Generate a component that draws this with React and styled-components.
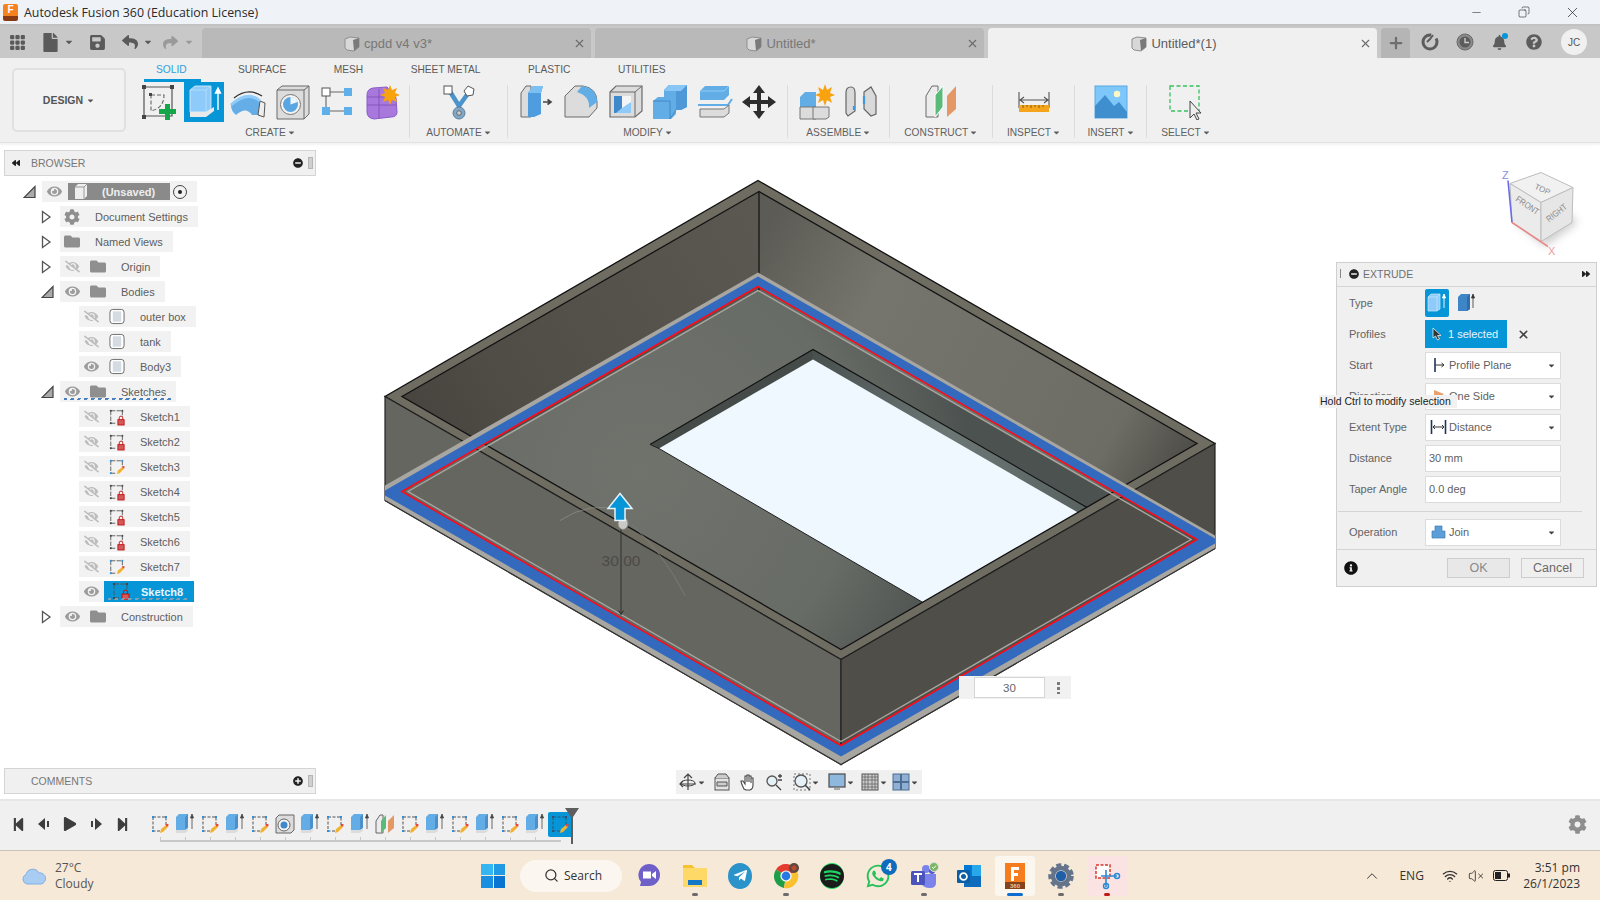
import React from "react";
import styled, { createGlobalStyle } from "styled-components";
import {
  FaCog, FaEye, FaEyeSlash, FaFolder, FaCaretDown, FaFile, FaSave, FaReply, FaShare,
  FaBell, FaQuestionCircle, FaMinusCircle, FaPlusCircle, FaInfoCircle, FaPlay,
  FaStepBackward, FaStepForward, FaTelegramPlane, FaSpotify, FaWhatsapp, FaForward, FaBackward,
} from "react-icons/fa";
import { BsGrid3X3GapFill } from "react-icons/bs";
import { Search, X, Minus, Plus, Copy, ChevronUp, Wifi, VolumeX } from "lucide-react";

const GlobalStyle = createGlobalStyle`
  html, body { margin: 0; padding: 0; background: #fff; }
  body { font-family: "Liberation Sans", Arial, sans-serif; overflow: hidden; }
  * { box-sizing: border-box; }
`;

const Page = styled.div`
  width: 1600px;
  height: 900px;
  display: flex;
  flex-direction: column;
  overflow: hidden;
`;

/* ---------- title bar ---------- */
const TitleBar = styled.div`
  height: 24px;
  background: #eff3f8;
  display: flex;
  align-items: center;
  padding-left: 3px;
  flex: none;
`;
const AppLogo = styled.div`
  width: 15px;
  height: 17px;
  border-radius: 2px;
  background: linear-gradient(#f58220 0 68%, #8a3a12 68%);
  color: #fff;
  font-size: 10px;
  font-weight: 700;
  text-align: center;
  line-height: 12px;
`;
const TitleText = styled.span`
  margin-left: 6px;
  font-family: "Open Sans", sans-serif;
  font-size: 12.4px;
  color: #2b2b2b;
`;
const WindowButtons = styled.div`
  margin-left: auto;
  display: flex;
  color: #222;
  padding-right: 4px;
`;
const WindowButton = styled.div`
  width: 48px;
  display: flex;
  justify-content: center;
  align-items: center;
  svg { transform: ${(p) => (p.$flip ? "scaleX(-1)" : "none")}; }
`;

/* ---------- document tabs ---------- */
const TabStrip = styled.div`
  height: 34px;
  flex: none;
  background: #c8c8c8;
  border-top: 2px solid #c2c2c2;
  display: flex;
  position: relative;
`;
const NavTools = styled.div`
  width: 202px;
  flex: none;
  position: relative;
  display: flex;
  align-items: center;
  padding-left: 9px;
  color: #5a5a5a;
`;
const NavTool = styled.div`
  display: flex;
  align-items: center;
  justify-content: center;
  flex: none;
  width: ${(p) => p.$w}px;
  margin-left: ${(p) => p.$gap || 0}px;
  color: ${(p) => (p.$dim ? "#9a9a9a" : "#5a5a5a")};
`;
const Tabs = styled.div`
  display: flex;
  gap: 4px;
  padding-top: 2px;
`;
const Tab = styled.div`
  width: 389px;
  height: 30px;
  border-radius: 4px 4px 0 0;
  background: ${(p) => (p.$active ? "#f0f0f0" : "#b9b9b9")};
  color: ${(p) => (p.$active ? "#5c5c5c" : "#777")};
  display: flex;
  align-items: center;
  font-size: 13px;
`;
const TabLabel = styled.div`
  flex: 1;
  display: flex;
  align-items: center;
  justify-content: center;
  gap: 4px;
  padding: 1px 0 0 7px;
`;
const TabClose = styled.div`
  width: 24px;
  display: flex;
  justify-content: center;
  color: #6a6a6a;
`;
const NewTab = styled.div`
  width: 29px;
  height: 30px;
  margin: 2px 0 0 4px;
  background: #b5b5b5;
  border-radius: 4px 4px 0 0;
  color: #6e6e6e;
  display: flex;
  align-items: center;
  justify-content: center;
`;
const StripIcons = styled.div`
  display: flex;
  align-items: center;
  color: #5c5c5c;
  padding-left: 3px;
`;
const StripIcon = styled.div`
  width: 34.5px;
  height: 28px;
  display: flex;
  align-items: center;
  justify-content: center;
  position: relative;
`;
const BellDot = styled.span`
  position: absolute;
  width: 6px;
  height: 6px;
  border-radius: 50%;
  background: #0696d7;
  top: 5px;
  right: 9px;
`;
const Avatar = styled.div`
  width: 26px;
  height: 26px;
  border-radius: 50%;
  background: #f0f0f0;
  margin-left: 10px;
  color: #555;
  font-size: 10px;
  display: flex;
  align-items: center;
  justify-content: center;
`;

/* ---------- ribbon ---------- */
const Toolbar = styled.div`
  height: 85px;
  flex: none;
  background: #f0f0f0;
  border-bottom: 1px solid #e2e2e2;
  box-shadow: 0 2px 2px #f2f2f2;
  display: flex;
  padding-left: 12px;
  position: relative;
  z-index: 2;
`;
const DesignButton = styled.div`
  width: 114px;
  height: 64px;
  margin-top: 10px;
  border: 2px solid #e0e0e0;
  border-radius: 5px;
  background: #f2f2f2;
  color: #555;
  font-size: 10.5px;
  font-weight: 700;
  display: flex;
  align-items: center;
  justify-content: center;
  gap: 3px;
`;
const RibbonBody = styled.div`
  display: flex;
  flex-direction: column;
`;
const RibbonTabs = styled.div`
  height: 24px;
  display: flex;
  align-items: center;
  gap: 47.5px;
  padding: 0 0 1px 30px;
`;
const RibbonTab = styled.span`
  font-size: 10.2px;
  color: ${(p) => (p.$active ? "#2e9fe0" : "#5a5a5a")};
  margin-right: ${(p) => (p.$active ? "4px" : "0")};
`;
const Groups = styled.div`
  display: flex;
  height: 56px;
`;
const Group = styled.div`
  width: ${(p) => p.$w}px;
  padding-left: ${(p) => p.$pad || 0}px;
  flex: none;
  display: flex;
  flex-direction: column;
  align-items: center;
  position: relative;
  &::after {
    content: "";
    position: absolute;
    right: 0;
    top: 3px;
    bottom: 0;
    width: 1px;
    background: ${(p) => (p.$last ? "transparent" : "#dcdcdc")};
  }
`;
const ToolRow = styled.div`
  display: flex;
  height: 40px;
`;
const ToolSlot = styled.div`
  width: 44.5px;
  display: flex;
  justify-content: center;
`;
const ToolButton = styled.div`
  width: 40px;
  height: 40px;
  display: flex;
  align-items: center;
  justify-content: center;
  position: relative;
  background: ${(p) => (p.$active ? "#0696d7" : "transparent")};
  ${(p) =>
    p.$active &&
    `&::before {
      content: "";
      position: absolute;
      top: -3px;
      left: -40px;
      width: 57px;
      height: 3px;
      background: #0696d7;
    }`}
`;
const GroupLabel = styled.div`
  height: 21px;
  padding-top: 5px;
  display: flex;
  align-items: center;
  gap: 1px;
  font-size: 10.2px;
  color: #5f5f5f;
`;

const Svg36 = styled.svg.attrs({ viewBox: "0 0 36 36" })`
  width: 36px;
  height: 36px;
  display: block;
`;

const SketchIcon = () => (
  <Svg36>
    <path d="M3 3H31V32H3Z" fill="none" stroke="#555" strokeWidth="1.2" />
    <path d="M10 11H23Q23 24 10 27Z" fill="none" stroke="#666" strokeWidth="1.1" strokeDasharray="4 2" />
    <g fill="#444">
      <rect x="1" y="1" width="4" height="4" /><rect x="29" y="1" width="4" height="4" />
      <rect x="1" y="31" width="4" height="4" /><rect x="8" y="9" width="3" height="3" />
    </g>
    <path d="M24 20h5v5h6v5h-6v6h-5v-6h-6v-5h6z" fill="#13a64a" />
  </Svg36>
);
const ExtrudeIcon = () => (
  <Svg36>
    <path d="M4 6L9 2H25V25L20 28H4Z" fill="#8ecbfa" stroke="#dff1ff" strokeWidth=".8" />
    <path d="M20 28V6H4M20 6L25 2" fill="none" stroke="#b9e0fb" strokeWidth=".8" />
    <path d="M4 28H20L28 23V27L20 33H4Z" fill="#e9e9e9" />
    <path d="M32 26V6M29.5 9L32 4L34.5 9Z" stroke="#fff" strokeWidth="1.4" fill="#fff" />
  </Svg36>
);
const RevolveIcon = () => (
  <Svg36>
    <path d="M4 14Q18 3 32 12" fill="none" stroke="#333" strokeWidth="1.3" />
    <path d="M1 21Q18 6 30 17L28 31H22Q16 22 6 31Q1 27 1 21Z" fill="#64ade6" />
    <path d="M30 17L35 19L34 33L28 31Z" fill="#eee" stroke="#555" />
    <path d="M1 21Q18 6 30 17" fill="none" stroke="#8ecbfa" strokeWidth="3" />
  </Svg36>
);
const HoleIcon = () => (
  <Svg36>
    <path d="M2 6L7 2H34V30L29 35H2Z" fill="#dcdcdc" stroke="#6b6b6b" />
    <path d="M29 35V6H2M29 6L34 2" fill="none" stroke="#6b6b6b" />
    <circle cx="15.500" cy="20.500" r="10" fill="#f4f4f4" stroke="#777" />
    <circle cx="15.500" cy="20.500" r="7.500" fill="#5aa6e2" />
    <path d="M15.500 20.500V13A7.500 7.500 0 0 1 22.500 18Z" fill="#eef6fc" />
  </Svg36>
);
const PatternIcon = () => (
  <Svg36>
    <path d="M7 8H27M7 8V27M7 27H27" stroke="#666" strokeWidth="1.1" fill="none" />
    <rect x="3" y="4" width="8" height="8" fill="#fff" stroke="#555" />
    <rect x="25" y="4" width="8" height="8" fill="#5fb0ea" />
    <rect x="3" y="23" width="8" height="8" fill="#5fb0ea" />
    <rect x="25" y="23" width="8" height="8" fill="#5fb0ea" />
  </Svg36>
);
const FormIcon = () => (
  <Svg36>
    <path d="M3 11Q3 5 9 4L23 3L32 14L33 28Q33 33 27 33L10 35Q3 34 3 28Z" fill="#a878dc" stroke="#8a5cc8" />
    <path d="M3 21H32M15 5V34M3 13H30" stroke="#7f54b8" fill="none" strokeWidth=".9" />
    <path d="M26 1l2 5 5-2-2 5 5 2-5 2 2 5-5-2-2 5-2-5-5 2 2-5-5-2 5-2-2-5 5 2z" fill="#f7a20e" />
  </Svg36>
);
const AutomateIcon = () => (
  <Svg36>
    <path d="M8 6L18 22L28 8M18 22V30" fill="none" stroke="#4a93cc" strokeWidth="4.5" />
    <rect x="3" y="2" width="8" height="8" fill="#fff" stroke="#555" />
    <path d="M27 2l6 3-1 6-6 1-3-5z" fill="#fff" stroke="#555" />
    <circle cx="18" cy="29" r="6" fill="#7fa7c8" stroke="#5e7f9a" />
    <circle cx="18" cy="29" r="2.3" fill="#d0d0d0" stroke="#666" />
  </Svg36>
);
const PressPullIcon = () => (
  <Svg36>
    <path d="M2 33V9L7 2H12V33Z" fill="#dcdcdc" stroke="#6b6b6b" />
    <path d="M9 33V9L14 2H24L22 9V30L15 33Z" fill="#4f9ddf" />
    <path d="M9 9H22L24 2H14Z" fill="#7cc0f3" />
    <path d="M24 18H31M28.500 15.500L32 18L28.500 20.500" stroke="#444" strokeWidth="1.6" fill="none" />
  </Svg36>
);
const FilletIcon = () => (
  <Svg36>
    <path d="M2 33V12L12 2H20Q34 4 34 18V24L26 33Z" fill="#dcdcdc" stroke="#6b6b6b" />
    <path d="M19 2Q34 4 34 18L26 24Q27 12 14 8Z" fill="#62ade6" />
  </Svg36>
);
const ShellIcon = () => (
  <Svg36>
    <path d="M2 8L8 2H34V27L27 33H2Z" fill="#dcdcdc" stroke="#6b6b6b" strokeWidth="1.2" />
    <path d="M27 33V8H2M27 8L34 2" fill="none" stroke="#6b6b6b" />
    <path d="M6 12H14V24H23V29H6Z" fill="#3f89cb" />
    <path d="M14 12H23V24H14Z" fill="#f4f4f4" />
    <path d="M14 24L23 18V29H8Z" fill="#8ecbfa" />
  </Svg36>
);
const CombineIcon = () => (
  <Svg36>
    <path d="M12 6L17 1H35V23L29 26H24V30L19 35H1V17L6 13H12Z" fill="#62ade6" />
    <path d="M24 26V7H12L17 1H35V23L29 26Z" fill="#4f98d8" />
    <path d="M12 7L17 1H35L29 7Z" fill="#87c6f5" />
    <path d="M24 26L18 35V17H1" fill="none" stroke="#4388c4" />
  </Svg36>
);
const OffsetIcon = () => (
  <Svg36>
    <path d="M3 7L8 2H32V11L27 16H3Z" fill="#62ade6" />
    <path d="M3 7H27L32 2" fill="none" stroke="#8ecbfa" />
    <path d="M1 21L31 21L35 15" fill="none" stroke="#62ade6" strokeWidth="2" />
    <path d="M3 25H27L32 21V29L27 33H3Z" fill="#dcdcdc" stroke="#777" />
  </Svg36>
);
const MoveIcon = () => (
  <Svg36>
    <path d="M18 1L24 9H20V16H27V12L35 18L27 24V20H20V27H24L18 35L12 27H16V20H9V24L1 18L9 12V16H16V9H12Z" fill="#2d2d2d" />
  </Svg36>
);
const NewComponentIcon = () => (
  <Svg36>
    <path d="M1 13L6 8H17V23H1Z" fill="#62ade6" />
    <path d="M1 23H17V35H1Z" fill="#dcdcdc" stroke="#777" />
    <path d="M14 23H30V33L27 35H14Z" fill="#dcdcdc" stroke="#777" />
    <path d="M26 0l2 6 5-3-2 6 5 2-5 2 2 6-5-3-2 6-2-6-5 3 2-6-5-2 5-2-2-6 5 3z" fill="#f7a20e" />
  </Svg36>
);
const JointIcon = () => (
  <Svg36>
    <path d="M3 9Q3 3 8 3Q12 3 12 9V27L5 32L3 29Z" fill="#d9d9d9" stroke="#666" strokeWidth="1.2" />
    <path d="M21 8L28 3L33 12V30L28 32L21 25Z" fill="#d9d9d9" stroke="#666" strokeWidth="1.2" />
    <path d="M11 22V26M21 12V20" stroke="#3f97dc" strokeWidth="2.2" />
  </Svg36>
);
const PlanesIcon = () => (
  <Svg36>
    <path d="M3 12L9 2H15V33H3Z" fill="#ececec" stroke="#6b6b6b" />
    <path d="M12 33V11L20 2V23Z" fill="#5abb78" stroke="#fff" />
    <path d="M24 33V12L33 2V25Z" fill="#e39866" />
  </Svg36>
);
const MeasureIcon = () => (
  <Svg36>
    <path d="M3 8V24M33 8V24M4 16H32M8 13L4 16L8 19M28 13L32 16L28 19" stroke="#555" fill="none" strokeWidth="1.1" />
    <rect x="3" y="21" width="30" height="7" fill="#f4a51c" />
    <path d="M7 21v3M11 21v2M15 21v3M19 21v2M23 21v3M27 21v2" stroke="#8a5c08" />
  </Svg36>
);
const PictureIcon = () => (
  <Svg36>
    <rect x="2" y="2" width="32" height="32" fill="#7ec7fb" stroke="#5ba8e2" />
    <circle cx="24" cy="10" r="3.2" fill="#fdf7c4" />
    <path d="M2 34V22L12 11L21 22L26 18L34 28V34Z" fill="#3f8fce" />
  </Svg36>
);
const SelectIcon = () => (
  <Svg36>
    <path d="M2 2H31V27H2Z" fill="none" stroke="#37c15f" strokeWidth="1.3" strokeDasharray="4 2.5" />
    <path d="M22 17V34L26 30L29 36L31 35L28 29H33Z" fill="#eee" stroke="#444" />
  </Svg36>
);

const ribbon = [
  { name: "CREATE", w: 284, pad: 5, tools: [SketchIcon, ExtrudeIcon, RevolveIcon, HoleIcon, PatternIcon, FormIcon], active: 1 },
  { name: "AUTOMATE", w: 98, tools: [AutomateIcon] },
  { name: "MODIFY", w: 280, tools: [PressPullIcon, FilletIcon, ShellIcon, CombineIcon, OffsetIcon, MoveIcon] },
  { name: "ASSEMBLE", w: 101.5, tools: [NewComponentIcon, JointIcon] },
  { name: "CONSTRUCT", w: 103.5, tools: [PlanesIcon] },
  { name: "INSPECT", w: 82, tools: [MeasureIcon] },
  { name: "INSERT", w: 72, tools: [PictureIcon] },
  { name: "SELECT", w: 78, tools: [SelectIcon], last: true },
];

const CubeGlyph = ({ size = 16 }) => (
  <svg width={size} height={size} viewBox="0 0 16 16">
    <path d="M1 3L6 1L15 2V11L10 15L3 14L1 12Z" fill="#d8d8d8" stroke="#8e8e8e" />
    <path d="M9 4L15 2V11L10 15Z" fill="#7a7a7a" />
  </svg>
);

/* ---------- viewport ---------- */
const Viewport = styled.div`
  flex: 1;
  position: relative;
  background: #fff;
  overflow: hidden;
`;
const ModelSvg = styled.svg`
  position: absolute;
  inset: 0;
  width: 100%;
  height: 100%;
`;
const SidePanel = styled.div`
  position: absolute;
  left: 4px;
  top: 7px;
  width: 312px;
`;
const PanelHeader = styled.div`
  height: 26px;
  background: #f0f0f0;
  border: 1px solid #d4d4d4;
  display: flex;
  align-items: center;
  padding-left: 7px;
  color: #777;
  font-size: 10.5px;
`;
const HeaderTitle = styled.span`
  margin-left: ${(p) => p.$offset}px;
`;
const PanelEnd = styled.div`
  margin-left: auto;
  display: flex;
  align-items: center;
  gap: 5px;
  padding-right: 2px;
  color: #222;
  &::after {
    content: "";
    width: 3px;
    height: 10px;
    background: #cfcfcf;
    border: 1px solid #b5b5b5;
  }
`;
const CommentsPanel = styled(PanelHeader)`
  position: absolute;
  left: 4px;
  bottom: 5px;
  width: 312px;
`;
const Tree = styled.div`
  display: flex;
  flex-direction: column;
  gap: 4px;
  padding-top: 5px;
`;
const TreeRow = styled.div`
  height: 21px;
  display: flex;
  align-items: center;
  padding-left: ${(p) => [19, 37, 75][p.$depth]}px;
`;
const Toggle = styled.svg.attrs({ viewBox: "0 0 14 14" })`
  width: 14px;
  height: 14px;
  flex: none;
  margin-right: 5px;
`;
const Chip = styled.div`
  height: 21px;
  display: flex;
  align-items: center;
  background: #f2f2f2;
  padding: 0 10px 0 4px;
  color: #5e5e5e;
  font-size: 11px;
  position: relative;
`;
const Stripe = styled.span`
  position: absolute;
  left: 4px;
  right: 4px;
  bottom: 2px;
  height: 2px;
  background: repeating-linear-gradient(
    120deg,
    ${(p) => p.$color} 0 3px,
    transparent 3px 6px
  );
`;
const EyeSlot = styled.span`
  width: 16px;
  flex: none;
  display: flex;
  justify-content: center;
  color: ${(p) => (p.$off ? "#bcbcbc" : "#9c9c9c")};
  margin-right: 10px;
`;
const NodeIcon = styled.span`
  width: 16px;
  flex: none;
  display: flex;
  justify-content: center;
  color: #8f8f8f;
`;
const NodeLabel = styled.span`
  margin-left: 15px;
  white-space: nowrap;
`;
const RootChip = styled.div`
  width: 102px;
  height: 17px;
  margin-left: -4px;
  background: #8a8a8a;
  display: flex;
  align-items: center;
  color: #eee;
  font-weight: 700;
  font-size: 11px;
`;
const RootLabel = styled.span`
  margin-left: 12px;
`;
const Target = styled.span`
  width: 14px;
  height: 14px;
  margin: 0 0 0 3px;
  border: 1px solid #444;
  border-radius: 50%;
  display: flex;
  align-items: center;
  justify-content: center;
  &::after {
    content: "";
    width: 4px;
    height: 4px;
    background: #222;
    border-radius: 50%;
  }
`;
const SelectedChip = styled.div`
  height: 21px;
  width: 90px;
  margin-left: -5px;
  padding-left: 37px;
  display: flex;
  align-items: center;
  background: #0696d7;
  color: #e8f6ff;
  font-weight: 700;
  position: relative;
`;
const SelectedGlyph = styled.span`
  position: absolute;
  left: 8px;
  top: 1px;
  display: flex;
`;

const Body = () => (
  <svg width="17" height="17" viewBox="0 0 17 17">
    <rect x="1" y="1" width="15" height="15" rx="3" fill="#fff" stroke="#666" />
    <rect x="4" y="3" width="9" height="11" fill="#d5dbe2" />
  </svg>
);
const TreeSketch = ({ kind }) => (
  <svg width="18" height="18" viewBox="0 0 18 18">
    <path d="M2 2H15M2 2V16M2 16H8M15 2V9" stroke="#555" fill="none" strokeDasharray="5 1.5" />
    {kind === "lock" ? (
      <g>
        <rect x="1" y="1" width="2" height="2" fill="#444" /><rect x="14" y="1" width="2" height="2" fill="#444" />
        <rect x="1" y="15" width="2" height="2" fill="#444" />
        <rect x="10" y="12" width="7" height="6" fill="#d35a5a" stroke="#c01010" />
        <path d="M11.5 12V10a2 2 0 0 1 4 0V12" fill="none" stroke="#c01010" />
      </g>
    ) : (
      <g>
        <rect x="1" y="1" width="2" height="2" fill="#2a8fe0" /><rect x="14" y="1" width="2" height="2" fill="#2a8fe0" />
        <rect x="1" y="15" width="2" height="2" fill="#2a8fe0" />
        <path d="M9 17L10 13L15 9L17 11L12 16Z" fill="#f2b233" />
        <rect x="15" y="8" width="2.4" height="2.4" fill="#e8483a" />
      </g>
    )}
  </svg>
);

const Open = () => (
  <Toggle>
    <path d="M1.5 1.5V12.5L9 7Z" fill="#fff" stroke="#555" strokeWidth="1.3" />
  </Toggle>
);
const Expanded = () => (
  <Toggle>
    <path d="M1 12.5H12V1.5Z" fill="#aaa" stroke="#444" strokeWidth="1.2" />
  </Toggle>
);
const Eye = ({ off }) => (
  <EyeSlot $off={off}>{off ? <FaEyeSlash size={15} /> : <FaEye size={15} />}</EyeSlot>
);

const sketches = [
  ["Sketch1", "lock"], ["Sketch2", "lock"], ["Sketch3", "pen"], ["Sketch4", "lock"],
  ["Sketch5", "lock"], ["Sketch6", "lock"], ["Sketch7", "pen"],
];

/* ---------- extrude dialog ---------- */
const Dialog = styled.div`
  position: absolute;
  right: 3px;
  top: 119px;
  width: 261px;
  height: 325px;
  background: #f0f0f0;
  border: 1px solid #cfcfcf;
  font-size: 11px;
  color: #636363;
  display: flex;
  flex-direction: column;
`;
const DialogHeader = styled.div`
  height: 24px;
  flex: none;
  display: flex;
  align-items: center;
  border-bottom: 1px solid #d4d4d4;
  padding: 0 6px 2px 3px;
  gap: 4px;
  color: #6f6f6f;
  font-size: 10.5px;
  margin-bottom: 2px;
`;
const DragBar = styled.span`
  width: 1px;
  height: 9px;
  background: #888;
  margin-right: 4px;
`;
const HeaderEnd = styled.span`
  margin-left: auto;
  color: #222;
  display: flex;
`;
const FormRows = styled.div`
  display: flex;
  flex-direction: column;
  gap: 3px;
  padding-left: 12px;
`;
const FormRow = styled.div`
  height: 28px;
  display: flex;
  align-items: center;
`;
const FormLabel = styled.span`
  width: 76px;
  flex: none;
`;
const TypeButton = styled.div`
  width: 24px;
  height: 28px;
  margin-right: 6px;
  background: ${(p) => (p.$active ? "#0696d7" : "transparent")};
  border-radius: 2px;
  display: flex;
  align-items: center;
  justify-content: center;
`;
const SelectionButton = styled.div`
  width: 82px;
  height: 28px;
  background: #0696d7;
  color: #e6f5ff;
  font-size: 11px;
  display: flex;
  align-items: center;
  gap: 6px;
  padding-left: 7px;
`;
const ClearButton = styled.span`
  margin-left: 10px;
  color: #444;
  display: flex;
`;
const Field = styled.div`
  width: 136px;
  height: 27px;
  background: #fff;
  border: 1px solid #dcdcdc;
  display: flex;
  align-items: center;
  padding: 0 4px 0 3px;
  color: #5f5f5f;
  font-size: 11px;
`;
const FieldIcon = styled.span`
  width: 19px;
  margin-right: 1px;
  flex: none;
  display: flex;
  justify-content: center;
`;
const FieldCaret = styled.span`
  margin-left: auto;
  color: #444;
  display: flex;
`;
const Tooltip = styled.div`
  position: absolute;
  left: -18px;
  top: 132px;
  height: 13px;
  width: 138px;
  background: #f1f1f1;
  color: #222;
  font-size: 10.5px;
  line-height: 13px;
  padding-left: 1px;
  white-space: nowrap;
  z-index: 2;
`;
const DialogRule = styled.div`
  height: 1px;
  margin: 8px 14px 6px 1px;
  background: #d4d4d4;
`;
const DialogFooter = styled.div`
  margin-top: 3px;
  flex: 1;
  border-top: 1px solid #d4d4d4;
  display: flex;
  align-items: center;
  padding: 0 12px 0 7px;
  gap: 11px;
  color: #111;
`;
const FooterButton = styled.div`
  width: 63px;
  height: 20px;
  border: 1px solid #cdcdcd;
  background: ${(p) => (p.$disabled ? "#e8e8e8" : "#efefef")};
  color: ${(p) => (p.$disabled ? "#888" : "#6a6a6a")};
  font-size: 12.5px;
  display: flex;
  align-items: center;
  justify-content: center;
  &:first-of-type { margin-left: auto; }
`;

/* ---------- floating canvas bits ---------- */
const DimensionBox = styled.div`
  position: absolute;
  left: 959px;
  top: 533px;
  width: 112px;
  height: 23px;
  background: #f1f1f1;
  display: flex;
  align-items: center;
  padding-left: 15px;
`;
const DimensionInput = styled.div`
  width: 71px;
  height: 21px;
  background: #fff;
  border: 1px solid #d6d6d6;
  color: #666;
  font-size: 11.5px;
  display: flex;
  align-items: center;
  justify-content: center;
`;
const Kebab = styled.span`
  margin-left: 12px;
  width: 3px;
  height: 13px;
  background: radial-gradient(circle, #777 1.4px, transparent 1.6px) 0 0 / 3px 5px;
`;
const NavBar = styled.div`
  position: absolute;
  left: 676px;
  bottom: 5px;
  width: 246px;
  height: 24px;
  background: #f0f0f0;
  display: flex;
  align-items: center;
`;
const NavIcon = styled.span`
  width: ${(p) => p.$w}px;
  display: flex;
  align-items: center;
  justify-content: center;
  flex: none;
  color: #444;
`;
const navIcons = [
  { w: 32, caret: true, d: <><path d="M9 1V17M5 5L9 1L13 5M1 11H17M4 8L1 11L4 14" stroke="#444" fill="none" strokeWidth="1.2" /><ellipse cx="9" cy="10" rx="7" ry="3" fill="none" stroke="#444" /></> },
  { w: 28, d: <><rect x="2" y="5" width="14" height="12" fill="#e4e4e4" stroke="#555" /><path d="M2 5L5 1H13L16 5M4 9H14V13H4Z" fill="#ccc" stroke="#555" /></> },
  { w: 24, d: <path d="M5 16Q2 10 2 8L4 8L6 11V3H8V9V2H10V9V3H12V10V5H14V12Q14 16 11 17H7Z" fill="#fff" stroke="#444" strokeWidth="1.1" /> },
  { w: 28, d: <><circle cx="7" cy="8" r="5" fill="#e5f1f7" stroke="#555" strokeWidth="1.3" /><path d="M11 12L16 17M13 3H17M15 1V5M13 7H17" stroke="#444" strokeWidth="1.3" /></> },
  { w: 36, caret: true, d: <><rect x="1" y="1" width="16" height="16" fill="none" stroke="#777" strokeDasharray="2 2" /><circle cx="8" cy="8" r="6" fill="#e5f1f7" stroke="#555" strokeWidth="1.3" /><path d="M12 12L17 17" stroke="#444" strokeWidth="1.6" /></> },
  { w: 34, caret: true, d: <><rect x="1" y="1" width="16" height="13" fill="#8fb8de" stroke="#555" strokeWidth="1.3" /><path d="M6 15H12V17H6Z" fill="#aaa" /></> },
  { w: 32, caret: true, d: <><rect x="1" y="1" width="16" height="16" fill="#ccc" stroke="#555" /><path d="M4 1V17M7 1V17M11 1V17M14 1V17M1 4H17M1 7H17M1 11H17M1 14H17" stroke="#666" strokeWidth=".8" /></> },
  { w: 31, caret: true, d: <><rect x="1" y="1" width="7.5" height="7.5" fill="#8fb0d4" stroke="#4d6d91" /><rect x="9.5" y="1" width="7.5" height="7.5" fill="#8fb0d4" stroke="#4d6d91" /><rect x="1" y="9.5" width="7.5" height="7.5" fill="#8fb0d4" stroke="#4d6d91" /><rect x="9.5" y="9.5" width="7.5" height="7.5" fill="#8fb0d4" stroke="#4d6d91" /></> },
];

/* ---------- timeline ---------- */
const Timeline = styled.div`
  height: 52px;
  flex: none;
  background: #f0f0f0;
  border-top: 2px solid #e6e6e6;
  border-bottom: 1px solid #c9c4ba;
  display: flex;
  align-items: center;
  padding-left: 5px;
  position: relative;
  color: #3d3d3d;
`;
const PlayButton = styled.span`
  width: 26px;
  display: flex;
  justify-content: center;
  margin-bottom: 3px;
`;
const Rail = styled.div`
  margin-left: 12.5px;
  display: flex;
  position: relative;
  padding-bottom: 5px;
  margin-top: 2px;
  &::after {
    content: "";
    position: absolute;
    left: 12px;
    right: 12px;
    bottom: 0;
    height: 2px;
    background: #c8c8c8;
  }
`;
const RailItem = styled.div`
  width: 25px;
  height: 25px;
  flex: none;
  display: flex;
  align-items: center;
  justify-content: center;
  position: relative;
  background: ${(p) => (p.$active ? "#0696d7" : "transparent")};
  border-radius: ${(p) => (p.$active ? "2px" : "0")};
  &::after {
    content: "";
    position: absolute;
    left: 12px;
    bottom: -5px;
    width: 1px;
    height: 5px;
    background: ${(p) => (p.$active ? "transparent" : "#c8c8c8")};
  }
`;
const Marker = styled.svg.attrs({ viewBox: "0 0 14 36" })`
  position: absolute;
  right: -6px;
  top: -4px;
  width: 14px;
  height: 36px;
`;
const TimelineGear = styled.span`
  margin-left: auto;
  padding: 0 13px 2px 0;
  color: #8e8e8e;
  display: flex;
`;

const RailSketch = ({ muted }) => (
  <svg width="20" height="20" viewBox="0 0 20 20">
    <path d="M3 3H16V11M3 3V17H10" stroke={muted ? "#31536e" : "#555"} fill="none" strokeDasharray="3 1.5" />
    <g fill={muted ? "#31536e" : "#2a8fe0"}>
      <rect x="2" y="2" width="2" height="2" /><rect x="15" y="2" width="2" height="2" /><rect x="2" y="16" width="2" height="2" />
    </g>
    <path d="M10 19L11 15L16 11L18 13L13 18Z" fill="#f2b233" />
    <rect x="16" y="10" width="2.4" height="2.4" fill="#e8483a" />
  </svg>
);
const RailExtrude = () => (
  <svg width="20" height="22" viewBox="0 0 20 22">
    <path d="M1 4L4 1H13V15L10 17H1Z" fill="#62ade6" />
    <path d="M10 17V4L13 1V15Z" fill="#4b8fcb" />
    <path d="M1 17H10L13 15V18L10 20H1Z" fill="#dcdcdc" />
    <path d="M17 16V3M15.5 5L17 1L18.5 5Z" stroke="#444" fill="#444" strokeWidth=".8" />
  </svg>
);
const RailHole = () => (
  <svg width="20" height="20" viewBox="0 0 20 20">
    <path d="M1 4L4 1H19V16L16 19H1Z" fill="#dcdcdc" stroke="#666" />
    <circle cx="9" cy="11" r="6" fill="#f3f3f3" stroke="#666" />
    <circle cx="9" cy="11" r="3.5" fill="#3f89cb" />
  </svg>
);
const RailPlane = () => (
  <svg width="20" height="20" viewBox="0 0 20 20">
    <path d="M1 7L5 1H8V19H1Z" fill="#ececec" stroke="#666" />
    <path d="M6 19V7L11 1V14Z" fill="#5abb78" />
    <path d="M13 19V7L19 1V14Z" fill="#e39866" />
  </svg>
);
const rail = ["s", "e", "s", "e", "s", "h", "e", "s", "e", "p", "s", "e", "s", "e", "s", "e"];
const railIcon = { s: RailSketch, e: RailExtrude, h: RailHole, p: RailPlane };

/* ---------- taskbar ---------- */
const Taskbar = styled.div`
  height: 49px;
  flex: none;
  background: #f6e9d8;
  display: flex;
  align-items: center;
  font-family: "Open Sans", sans-serif;
  font-size: 12px;
  color: #444;
`;
const Weather = styled.div`
  width: 481px;
  flex: none;
  display: flex;
  align-items: center;
  padding-left: 21px;
  gap: 8px;
  line-height: 16px;
`;
const WeatherText = styled.div`
  color: #555;
`;
const StartButton = styled.div`
  width: 24px;
  height: 24px;
  display: grid;
  grid-template: 1fr 1fr / 1fr 1fr;
  gap: 1px;
  flex: none;
`;
const StartPane = styled.span`
  background: ${(p) => p.$c};
`;
const SearchPill = styled.div`
  width: 102px;
  height: 32px;
  margin: 0 4px 0 15px;
  border-radius: 16px;
  background: #fbf7f0;
  display: flex;
  align-items: center;
  padding-left: 24px;
  gap: 5px;
  color: #333;
  flex: none;
`;
const AppSlot = styled.div`
  width: 45.8px;
  height: 40px;
  flex: none;
  display: flex;
  align-items: center;
  justify-content: center;
  position: relative;
  ${(p) =>
    p.$bg &&
    `&::before {
      content: "";
      position: absolute;
      left: 3px;
      right: 3px;
      top: 0;
      bottom: 0;
      border-radius: 3px;
      background: ${p.$bg};
    }`}
  &::after {
    content: "";
    position: absolute;
    bottom: 0;
    left: 50%;
    transform: translateX(-50%);
    width: ${(p) => (p.$dotWide ? "16px" : "6px")};
    height: 2.5px;
    border-radius: 2px;
    background: ${(p) => p.$dot || "transparent"};
  }
  > * { position: relative; }
`;
const AppCircle = styled.div`
  width: 24px;
  height: 26px;
  border-radius: 50%;
  background: ${(p) => p.$c};
  color: #fff;
  display: flex;
  align-items: center;
  justify-content: center;
`;
const Badge = styled.span`
  position: absolute !important;
  top: 3px;
  right: 4px;
  width: 16px;
  height: 16px;
  border-radius: 50%;
  background: #0f6cbd;
  color: #fff;
  font-size: 10px;
  font-weight: 700;
  display: flex;
  align-items: center;
  justify-content: center;
`;
const Tray = styled.div`
  margin-left: auto;
  display: flex;
  align-items: center;
  padding-right: 20px;
  color: #333;
`;
const TrayItem = styled.span`
  display: flex;
  justify-content: center;
  width: ${(p) => p.$w}px;
  margin-left: ${(p) => p.$gap || 0}px;
`;
const Clock = styled.div`
  margin-left: 13px;
  text-align: right;
  line-height: 16px;
`;

const MeetIcon = () => (
  <svg width="24" height="26" viewBox="0 0 24 26">
    <path d="M12 1a11 11 0 0 1 0 22H3l1-4A11 11 0 0 1 12 1Z" fill="#6f5fc9" />
    <path d="M6 8.5H14V15.5H6ZM15 11L19 8V16L15 13Z" fill="#fff" />
  </svg>
);
const FolderIcon = () => (
  <svg width="26" height="26" viewBox="0 0 26 26">
    <path d="M1 2H10L13 5H25V24H1Z" fill="#f4c430" />
    <path d="M1 5H25V24H1Z" fill="#ffd968" />
    <rect x="6" y="17" width="14" height="5" fill="#1279c8" />
  </svg>
);
const ChromeIcon = () => (
  <svg width="26" height="26" viewBox="0 0 26 26">
    <path d="M13 13L3 6.5A12 12 0 0 1 24 8Z" fill="#e33b2e" />
    <path d="M13 13L3 6.5A12 12 0 0 0 11 25Z" fill="#1f9e4a" />
    <path d="M13 13L24 8A12 12 0 0 1 11 25Z" fill="#fbc02d" />
    <circle cx="13" cy="13" r="5.6" fill="#fff" />
    <circle cx="13" cy="13" r="4.4" fill="#2a78e4" />
    <circle cx="21" cy="5" r="5" fill="#5c4a3e" />
    <path d="M18 4L22 2L24 6L20 8Z" fill="#c04a2e" />
  </svg>
);
const TeamsIcon = () => (
  <svg width="30" height="28" viewBox="0 0 30 28">
    <circle cx="17" cy="7" r="4" fill="#7b83eb" />
    <circle cx="23" cy="9" r="3" fill="#5059c9" />
    <path d="M12 12H27V21Q27 26 21 26Q14 26 12 21Z" fill="#7b83eb" />
    <rect x="2" y="9" width="14" height="14" rx="1.5" fill="#4b53bc" />
    <path d="M5 12H13M9 12V20" stroke="#fff" strokeWidth="2" />
    <circle cx="25" cy="5" r="4.5" fill="#7bb661" stroke="#ddd" />
    <path d="M23 5L24.5 6.5L27 3.5" stroke="#fff" fill="none" />
  </svg>
);
const OutlookIcon = () => (
  <svg width="26" height="26" viewBox="0 0 26 26">
    <rect x="8" y="2" width="17" height="22" fill="#28a8ea" />
    <path d="M8 2H16V13H8Z" fill="#0078d4" />
    <path d="M8 13L25 13V24H8Z" fill="#0f6cbd" />
    <rect x="1" y="7" width="13" height="13" rx="1" fill="#0a5ea8" />
    <circle cx="7.5" cy="13.5" r="3.4" fill="none" stroke="#fff" strokeWidth="1.8" />
  </svg>
);
const FusionIcon = () => (
  <svg width="24" height="30" viewBox="0 0 24 30">
    <path d="M2 2H22V21H2Z" fill="#f57c1f" />
    <path d="M2 21H22V28H2Z" fill="#86431a" />
    <path d="M8 6H16V9H11V12H15V15H11V20H8Z" fill="#fff" />
    <text x="12" y="27" textAnchor="middle" fontFamily="Liberation Sans, sans-serif" fontSize="6" fontWeight="700" fill="#e6c2a0">360</text>
  </svg>
);
const SettingsIcon = () => (
  <svg width="28" height="28" viewBox="0 0 28 28">
    <circle cx="14" cy="14" r="11" fill="none" stroke="#64748b" strokeWidth="3.5" strokeDasharray="5 2.8" />
    <circle cx="14" cy="14" r="8" fill="none" stroke="#64748b" strokeWidth="4.5" />
    <circle cx="14" cy="14" r="5.2" fill="#1f5fa8" />
  </svg>
);
const SnipIcon = () => (
  <svg width="28" height="28" viewBox="0 0 28 28">
    <path d="M3 3H17V16H3Z" fill="#fff" stroke="#d8362c" strokeWidth="1.5" strokeDasharray="3 1.5" />
    <path d="M13 8V25M24 14H8" stroke="#2b8ad6" strokeWidth="1.6" />
    <circle cx="13" cy="24" r="2.5" fill="none" stroke="#2b8ad6" strokeWidth="1.5" />
    <circle cx="24" cy="14" r="2.5" fill="none" stroke="#2b8ad6" strokeWidth="1.5" />
  </svg>
);

/* ---------- the fusion model, in page coordinates ---------- */
const Model = () => (
  <ModelSvg viewBox="0 143 1600 655">
    <defs>
      <linearGradient id="backLeft" x1="402" y1="450" x2="759" y2="230" gradientUnits="userSpaceOnUse">
        <stop offset="0" stopColor="#45423d" />
        <stop offset=".3" stopColor="#504d47" />
        <stop offset="1" stopColor="#5a5850" />
      </linearGradient>
      <linearGradient id="backRight" x1="759" y1="240" x2="1197" y2="490" gradientUnits="userSpaceOnUse">
        <stop offset="0" stopColor="#5c5b55" />
        <stop offset=".25" stopColor="#75756d" />
        <stop offset=".8" stopColor="#6d6d65" />
        <stop offset="1" stopColor="#44433f" />
      </linearGradient>
      <radialGradient id="floorShade" cx="640" cy="470" r="330" gradientUnits="userSpaceOnUse">
        <stop offset="0" stopColor="#70736c" />
        <stop offset=".65" stopColor="#686c66" />
        <stop offset="1" stopColor="#4c5250" />
      </radialGradient>
      <linearGradient id="holeWall" x1="813" y1="350" x2="1087" y2="510" gradientUnits="userSpaceOnUse">
        <stop offset="0" stopColor="#48504e" />
        <stop offset=".5" stopColor="#6c7775" />
        <stop offset="1" stopColor="#586260" />
      </linearGradient>
      <filter id="cubeShadow" x="-30%" y="-30%" width="160%" height="160%">
        <feGaussianBlur stdDeviation="4" />
      </filter>
    </defs>

    <path d="M402 396L759 191V290L402 495Z" fill="url(#backLeft)" />
    <path d="M759 191L1197 443V542L759 290Z" fill="url(#backRight)" />
    <path d="M759 290L1197 542L841 748L402 495Z" fill="url(#floorShade)" />
    <path d="M759 191V290" stroke="#111" strokeWidth="1.2" />

    <path d="M650 444L813 349V359L659 448Z" fill="#454b49" />
    <path d="M813 349L1087 507L1078 512L813 359Z" fill="url(#holeWall)" />
    <path d="M650 444L813 349L1087 507" fill="none" stroke="#111" strokeWidth="1.1" />
    <path d="M813 359L1078 512L923 602L659 448Z" fill="#f0f8ff" />
    <path d="M650 444L659 448L923 602" fill="none" stroke="#222" strokeWidth="1" />

    <path fillRule="evenodd" d="M758 180L1215 443L841 659L385 396ZM759 191L402 396L841 649L1197 443Z" fill="#6f6c62" stroke="#111" strokeWidth="1.3" />
    <path d="M385 396L841 659V764L385 500Z" fill="#666660" stroke="#222" strokeWidth="1.2" />
    <path d="M841 659L1215 443V548L841 764Z" fill="#504e48" stroke="#222" strokeWidth="1.2" />

    <path fillRule="evenodd" d="M385 485L758 272L1215 535V548L841 764L385 500ZM402 491L841 745L1197 539L758 286Z" fill="#a8a6a1" />
    <path fillRule="evenodd" opacity=".93" d="M385 490L758 276L1215 538V543L841 756L385 495ZM402 491L841 745L1197 539L758 286Z" fill="#2a65c0" />
    <path d="M408 491L758 290L1191 539L841 741Z" fill="none" stroke="#a8a6a1" strokeWidth="1.4" />
    <path d="M402 491L758 286L1197 539L841 745Z" fill="none" stroke="#ff0a18" strokeWidth="1.6" />
    <path d="M385 500L841 764L1215 548" fill="none" stroke="#333" strokeWidth="1.2" />

    <path d="M560 520Q590 500 621 510" fill="none" stroke="#8c8c86" strokeWidth=".8" />
    <path d="M632 524Q665 555 685 595" fill="none" stroke="#7f7f79" strokeWidth=".8" />
    <path d="M621 528V614M618.5 610L621 614L623.500 610" fill="none" stroke="#2e2e2c" strokeWidth="1" />
    <text x="621" y="565" textAnchor="middle" fontFamily="Liberation Sans, sans-serif" fontSize="15.500" fill="#4b4b47">30.00</text>
    <ellipse cx="623" cy="523" rx="5" ry="6" fill="#c9c9c6" stroke="#888" />
    <path d="M620 493L632 508H625V520H615V508H608Z" fill="#0696d7" stroke="#e8f4fb" strokeWidth="1.5" />

    <path d="M1516 222L1545 246L1578 222L1540 190Z" fill="#777" opacity=".35" filter="url(#cubeShadow)" />
    <path d="M1541 172L1573 187L1541 202L1510 183Z" fill="#f1f1f1" stroke="#bdbdbd" />
    <path d="M1510 183L1541 202V241L1512 222Z" fill="#ebebeb" stroke="#bdbdbd" />
    <path d="M1541 202L1573 187L1572 222L1541 241Z" fill="#e6e6e6" stroke="#bdbdbd" />
    <g fontFamily="Liberation Sans, sans-serif" fontSize="8" fill="#8a8a8a">
      <text transform="translate(1534 188) rotate(24)">TOP</text>
      <text transform="translate(1515 200) rotate(34) scale(.95 1.1)">FRONT</text>
      <text transform="translate(1549 222) rotate(-38) scale(.95 1.1)">RIGHT</text>
    </g>
    <path d="M1508 180L1512 222" stroke="#6a6ae8" strokeWidth="1.6" />
    <path d="M1512 222L1548 246" stroke="#e88a8a" strokeWidth="1.6" />
    <g fontFamily="Liberation Sans, sans-serif" fontSize="11">
      <text x="1502" y="178" fill="#8d8de8">Z</text>
      <text x="1548" y="254" fill="#f09a9a">X</text>
    </g>
  </ModelSvg>
);

const Extrude2 = ({ color }) => (
  <svg width="20" height="20" viewBox="0 0 20 20">
    <path d="M1 4L4 1H13V16L10 18H1Z" fill={color} stroke="#cbe8fb" strokeWidth=".7" />
    <path d="M10 18V4H1M10 4L13 1" fill="none" stroke="#cbe8fb" strokeWidth=".7" />
    <path d="M17 15V3M15.5 5L17 1L18.5 5Z" stroke="#fff" fill="#fff" strokeWidth=".9" />
  </svg>
);

export default function App() {
  return (
    <Page>
      <GlobalStyle />

      <TitleBar>
        <AppLogo>F</AppLogo>
        <TitleText>Autodesk Fusion 360 (Education License)</TitleText>
        <WindowButtons>
          <WindowButton><Minus size={13} strokeWidth={1} /></WindowButton>
          <WindowButton $flip><Copy size={12} strokeWidth={1.2} /></WindowButton>
          <WindowButton><X size={17} strokeWidth={1} /></WindowButton>
        </WindowButtons>
      </TitleBar>

      <TabStrip>
        <NavTools>
          <BsGrid3X3GapFill size={17} />
          <NavTool $w={25} $gap={12}><FaFile size={19} /></NavTool>
          <NavTool $w={12}><FaCaretDown size={10} /></NavTool>
          <NavTool $w={44}><FaSave size={17} /></NavTool>
          <NavTool $w={21}><FaReply size={16} /></NavTool>
          <NavTool $w={16}><FaCaretDown size={10} /></NavTool>
          <NavTool $w={28} $dim><FaShare size={15} /></NavTool>
          <NavTool $w={10} $dim><FaCaretDown size={10} /></NavTool>
        </NavTools>
        <Tabs>
          <Tab>
            <TabLabel><CubeGlyph />cpdd v4 v3*</TabLabel>
            <TabClose><X size={13} /></TabClose>
          </Tab>
          <Tab>
            <TabLabel><CubeGlyph />Untitled*</TabLabel>
            <TabClose><X size={13} /></TabClose>
          </Tab>
          <Tab $active>
            <TabLabel><CubeGlyph />Untitled*(1)</TabLabel>
            <TabClose><X size={13} /></TabClose>
          </Tab>
        </Tabs>
        <NewTab><Plus size={18} strokeWidth={3} /></NewTab>
        <StripIcons>
          <StripIcon>
            <svg width="18" height="18" viewBox="0 0 18 18">
              <circle cx="9" cy="9" r="7" fill="none" stroke="#5c5c5c" strokeWidth="3" strokeDasharray="34 6" />
              <path d="M6 9L9 6L12 2" stroke="#5c5c5c" strokeWidth="2" fill="none" />
            </svg>
          </StripIcon>
          <StripIcon>
            <svg width="18" height="18" viewBox="0 0 18 18">
              <circle cx="9" cy="9" r="8" fill="#8a8a8a" stroke="#6a6a6a" />
              <circle cx="9" cy="9" r="5.500" fill="#5c5c5c" />
              <path d="M9 5V9.500H13" stroke="#ccc" fill="none" strokeWidth="1.4" />
            </svg>
          </StripIcon>
          <StripIcon><FaBell size={15} /><BellDot /></StripIcon>
          <StripIcon><FaQuestionCircle size={16} /></StripIcon>
          <Avatar>JC</Avatar>
        </StripIcons>
      </TabStrip>

      <Toolbar>
        <DesignButton>DESIGN <FaCaretDown size={9} /></DesignButton>
        <RibbonBody>
          <RibbonTabs>
            {["SOLID", "SURFACE", "MESH", "SHEET METAL", "PLASTIC", "UTILITIES"].map((t, i) => (
              <RibbonTab key={t} $active={i === 0}>{t}</RibbonTab>
            ))}
          </RibbonTabs>
          <Groups>
            {ribbon.map((g) => (
              <Group key={g.name} $w={g.w} $pad={g.pad} $last={g.last}>
                <ToolRow>
                  {g.tools.map((Icon, i) => (
                    <ToolSlot key={i}>
                      <ToolButton $active={g.active === i}><Icon /></ToolButton>
                    </ToolSlot>
                  ))}
                </ToolRow>
                <GroupLabel>{g.name} <FaCaretDown size={9} /></GroupLabel>
              </Group>
            ))}
          </Groups>
        </RibbonBody>
      </Toolbar>

      <Viewport>
        <Model />

        <SidePanel>
          <PanelHeader>
            <FaBackward size={8} color="#222" />
            <HeaderTitle $offset={11}>BROWSER</HeaderTitle>
            <PanelEnd><FaMinusCircle size={10} /></PanelEnd>
          </PanelHeader>
          <Tree>
            <TreeRow $depth={0}>
              <Expanded />
              <Chip>
                <EyeSlot>
                  <FaEye size={15} />
                </EyeSlot>
                <RootChip>
                  <svg width="18" height="17" viewBox="0 0 18 17" style={{ marginLeft: 4 }}>
                    <path d="M3 4L6 1H15V13L12 16H3Z" fill="#eee" />
                    <path d="M12 16V4H3M12 4L15 1" fill="none" stroke="#999" />
                  </svg>
                  <RootLabel>(Unsaved)</RootLabel>
                </RootChip>
                <Target />
              </Chip>
            </TreeRow>
            <TreeRow $depth={1}>
              <Open />
              <Chip>
                <NodeIcon><FaCog size={16} /></NodeIcon>
                <NodeLabel>Document Settings</NodeLabel>
              </Chip>
            </TreeRow>
            <TreeRow $depth={1}>
              <Open />
              <Chip>
                <NodeIcon><FaFolder size={17} /></NodeIcon>
                <NodeLabel>Named Views</NodeLabel>
              </Chip>
            </TreeRow>
            <TreeRow $depth={1}>
              <Open />
              <Chip>
                <Eye off />
                <NodeIcon><FaFolder size={17} /></NodeIcon>
                <NodeLabel>Origin</NodeLabel>
              </Chip>
            </TreeRow>
            <TreeRow $depth={1}>
              <Expanded />
              <Chip>
                <Eye />
                <NodeIcon><FaFolder size={17} /></NodeIcon>
                <NodeLabel>Bodies</NodeLabel>
              </Chip>
            </TreeRow>
            {[["outer box", true], ["tank", true], ["Body3", false]].map(([name, off]) => (
              <TreeRow key={name} $depth={2}>
                <Chip>
                  <Eye off={off} />
                  <NodeIcon><Body /></NodeIcon>
                  <NodeLabel>{name}</NodeLabel>
                </Chip>
              </TreeRow>
            ))}
            <TreeRow $depth={1}>
              <Expanded />
              <Chip>
                <Eye />
                <NodeIcon><FaFolder size={17} /></NodeIcon>
                <NodeLabel>Sketches</NodeLabel>
                <Stripe $color="#4a7fc0" />
              </Chip>
            </TreeRow>
            {sketches.map(([name, kind]) => (
              <TreeRow key={name} $depth={2}>
                <Chip>
                  <Eye off />
                  <NodeIcon><TreeSketch kind={kind} /></NodeIcon>
                  <NodeLabel>{name}</NodeLabel>
                </Chip>
              </TreeRow>
            ))}
            <TreeRow $depth={2}>
              <Chip style={{ paddingRight: 0 }}>
                <Eye />
                <SelectedChip>
                  <SelectedGlyph><TreeSketch kind="lock" /></SelectedGlyph>
                  Sketch8
                  <Stripe $color="#7f9fb5" />
                </SelectedChip>
              </Chip>
            </TreeRow>
            <TreeRow $depth={1}>
              <Open />
              <Chip>
                <Eye />
                <NodeIcon><FaFolder size={17} /></NodeIcon>
                <NodeLabel>Construction</NodeLabel>
              </Chip>
            </TreeRow>
          </Tree>
        </SidePanel>

        <CommentsPanel>
          <HeaderTitle $offset={19}>COMMENTS</HeaderTitle>
          <PanelEnd><FaPlusCircle size={10} /></PanelEnd>
        </CommentsPanel>

        <Dialog>
          <DialogHeader>
            <DragBar />
            <FaMinusCircle size={10} color="#222" />
            EXTRUDE
            <HeaderEnd><FaForward size={8} /></HeaderEnd>
          </DialogHeader>
          <FormRows>
            <FormRow>
              <FormLabel>Type</FormLabel>
              <TypeButton $active><Extrude2 color="#8ecbfa" /></TypeButton>
              <TypeButton><svg width="20" height="20" viewBox="0 0 20 20">
                <path d="M1 4L4 1H13V16L10 18H1Z" fill="#3d85c6" />
                <path d="M10 18V4L13 1V16Z" fill="#2f6ea8" />
                <path d="M16 15V3M14.500 5L16 1L17.500 5Z" stroke="#333" fill="#333" strokeWidth=".8" />
              </svg></TypeButton>
            </FormRow>
            <FormRow>
              <FormLabel>Profiles</FormLabel>
              <SelectionButton>
                <svg width="10" height="14" viewBox="0 0 10 14">
                  <path d="M1 1V11L3.500 9L5.500 13L7.500 12L5.500 8.500H9Z" fill="#333" stroke="#eee" strokeWidth=".8" />
                </svg>
                1 selected
              </SelectionButton>
              <ClearButton><X size={13} strokeWidth={3} /></ClearButton>
            </FormRow>
            <FormRow>
              <FormLabel>Start</FormLabel>
              <Field>
                <FieldIcon>
                  <svg width="14" height="14" viewBox="0 0 14 14">
                    <path d="M3 0V14" stroke="#1d3557" strokeWidth="1.6" />
                    <path d="M3 7H12M9.500 5L12 7L9.500 9" stroke="#333" fill="none" />
                  </svg>
                </FieldIcon>
                Profile Plane
                <FieldCaret><FaCaretDown size={9} /></FieldCaret>
              </Field>
            </FormRow>
            <FormRow>
              <FormLabel>Direction</FormLabel>
              <Field>
                <FieldIcon>
                  <svg width="14" height="14" viewBox="0 0 14 14">
                    <path d="M2 1L12 5L2 12Z" fill="#e9a06a" />
                  </svg>
                </FieldIcon>
                One Side
                <FieldCaret><FaCaretDown size={9} /></FieldCaret>
              </Field>
            </FormRow>
            <FormRow>
              <FormLabel>Extent Type</FormLabel>
              <Field>
                <FieldIcon>
                  <svg width="17" height="16" viewBox="0 0 17 16">
                    <path d="M1.500 1V15M15.500 1V15" stroke="#1d3557" strokeWidth="1.6" />
                    <path d="M3 8H14M5 6L3 8L5 10M12 6L14 8L12 10" stroke="#333" fill="none" />
                  </svg>
                </FieldIcon>
                Distance
                <FieldCaret><FaCaretDown size={9} /></FieldCaret>
              </Field>
            </FormRow>
            <FormRow>
              <FormLabel>Distance</FormLabel>
              <Field>30 mm</Field>
            </FormRow>
            <FormRow>
              <FormLabel>Taper Angle</FormLabel>
              <Field>0.0 deg</Field>
            </FormRow>
          </FormRows>
          <Tooltip>Hold Ctrl to modify selection</Tooltip>
          <DialogRule />
          <FormRows>
            <FormRow>
              <FormLabel>Operation</FormLabel>
              <Field>
                <FieldIcon>
                  <svg width="15" height="14" viewBox="0 0 15 14">
                    <path d="M4 1H11V6H14V13H1V6H4Z" fill="#5c9ed8" stroke="#3f7fb8" strokeWidth=".7" />
                  </svg>
                </FieldIcon>
                Join
                <FieldCaret><FaCaretDown size={9} /></FieldCaret>
              </Field>
            </FormRow>
          </FormRows>
          <DialogFooter>
            <FaInfoCircle size={14} />
            <FooterButton $disabled>OK</FooterButton>
            <FooterButton>Cancel</FooterButton>
          </DialogFooter>
        </Dialog>

        <DimensionBox>
          <DimensionInput>30</DimensionInput>
          <Kebab />
        </DimensionBox>

        <NavBar>
          {navIcons.map((n, i) => (
            <NavIcon key={i} $w={n.w}>
              <svg width="18" height="18" viewBox="0 0 18 18">{n.d}</svg>
              {n.caret && <FaCaretDown size={9} />}
            </NavIcon>
          ))}
        </NavBar>
      </Viewport>

      <Timeline>
        <PlayButton><FaStepBackward size={15} /></PlayButton>
        <PlayButton>
          <svg width="14" height="14" viewBox="0 0 14 14"><path d="M8 1V13L1 7ZM10 4H12V10H10Z" fill="#3d3d3d" /></svg>
        </PlayButton>
        <PlayButton><FaPlay size={14} /></PlayButton>
        <PlayButton>
          <svg width="14" height="14" viewBox="0 0 14 14"><path d="M6 1V13L13 7ZM2 4H4V10H2Z" fill="#3d3d3d" /></svg>
        </PlayButton>
        <PlayButton><FaStepForward size={15} /></PlayButton>
        <Rail>
          {rail.map((k, i) => {
            const Icon = railIcon[k];
            return <RailItem key={i}><Icon /></RailItem>;
          })}
          <RailItem $active>
            <RailSketch muted />
            <Marker>
              <path d="M0 0H14L8 9V36H6V9Z" fill="#5e5e5e" />
            </Marker>
          </RailItem>
        </Rail>
        <TimelineGear><FaCog size={19} /></TimelineGear>
      </Timeline>

      <Taskbar>
        <Weather>
          <svg width="26" height="20" viewBox="0 0 26 20">
            <path d="M6 18A5 5 0 0 1 5 8.500A7 7 0 0 1 18 7A5.500 5.500 0 0 1 20 18Z" fill="#a9cdf2" stroke="#7fb0e6" />
          </svg>
          <WeatherText>27°C<br />Cloudy</WeatherText>
        </Weather>
        <StartButton>
          <StartPane $c="#33b6f2" />
          <StartPane $c="#1f9be6" />
          <StartPane $c="#1a8fe0" />
          <StartPane $c="#0a74d2" />
        </StartButton>
        <SearchPill><Search size={15} />Search</SearchPill>
        <AppSlot><MeetIcon /></AppSlot>
        <AppSlot $dot="#6b6b6b"><FolderIcon /></AppSlot>
        <AppSlot><AppCircle $c="#2a93c9"><FaTelegramPlane size={15} /></AppCircle></AppSlot>
        <AppSlot $dot="#6b6b6b"><ChromeIcon /></AppSlot>
        <AppSlot><AppCircle $c="#1ed760"><FaSpotify size={26} color="#1b1b1b" /></AppCircle></AppSlot>
        <AppSlot><FaWhatsapp size={26} color="#25c15a" /><Badge>4</Badge></AppSlot>
        <AppSlot $dot="#6b6b6b"><TeamsIcon /></AppSlot>
        <AppSlot><OutlookIcon /></AppSlot>
        <AppSlot $bg="#fbf6ee" $dot="#0f6cd0" $dotWide><FusionIcon /></AppSlot>
        <AppSlot $dot="#6b6b6b"><SettingsIcon /></AppSlot>
        <AppSlot $bg="#fbe3e3" $dot="#c01818"><SnipIcon /></AppSlot>
        <Tray>
          <TrayItem $w={18}><ChevronUp size={18} strokeWidth={1.3} /></TrayItem>
          <TrayItem $w={27} $gap={17}>ENG</TrayItem>
          <TrayItem $w={17} $gap={16}><Wifi size={16} /></TrayItem>
          <TrayItem $w={17} $gap={9}><VolumeX size={16} strokeWidth={1.3} /></TrayItem>
          <TrayItem $w={18} $gap={8}>
            <svg width="17" height="11" viewBox="0 0 17 11">
              <rect x=".5" y=".5" width="14" height="10" rx="2" fill="none" stroke="#222" />
              <rect x="2" y="2" width="6" height="7" fill="#222" />
              <rect x="15" y="3.500" width="2" height="4" fill="#222" />
            </svg>
          </TrayItem>
          <Clock>3:51 pm<br />26/1/2023</Clock>
        </Tray>
      </Taskbar>
    </Page>
  );
}
